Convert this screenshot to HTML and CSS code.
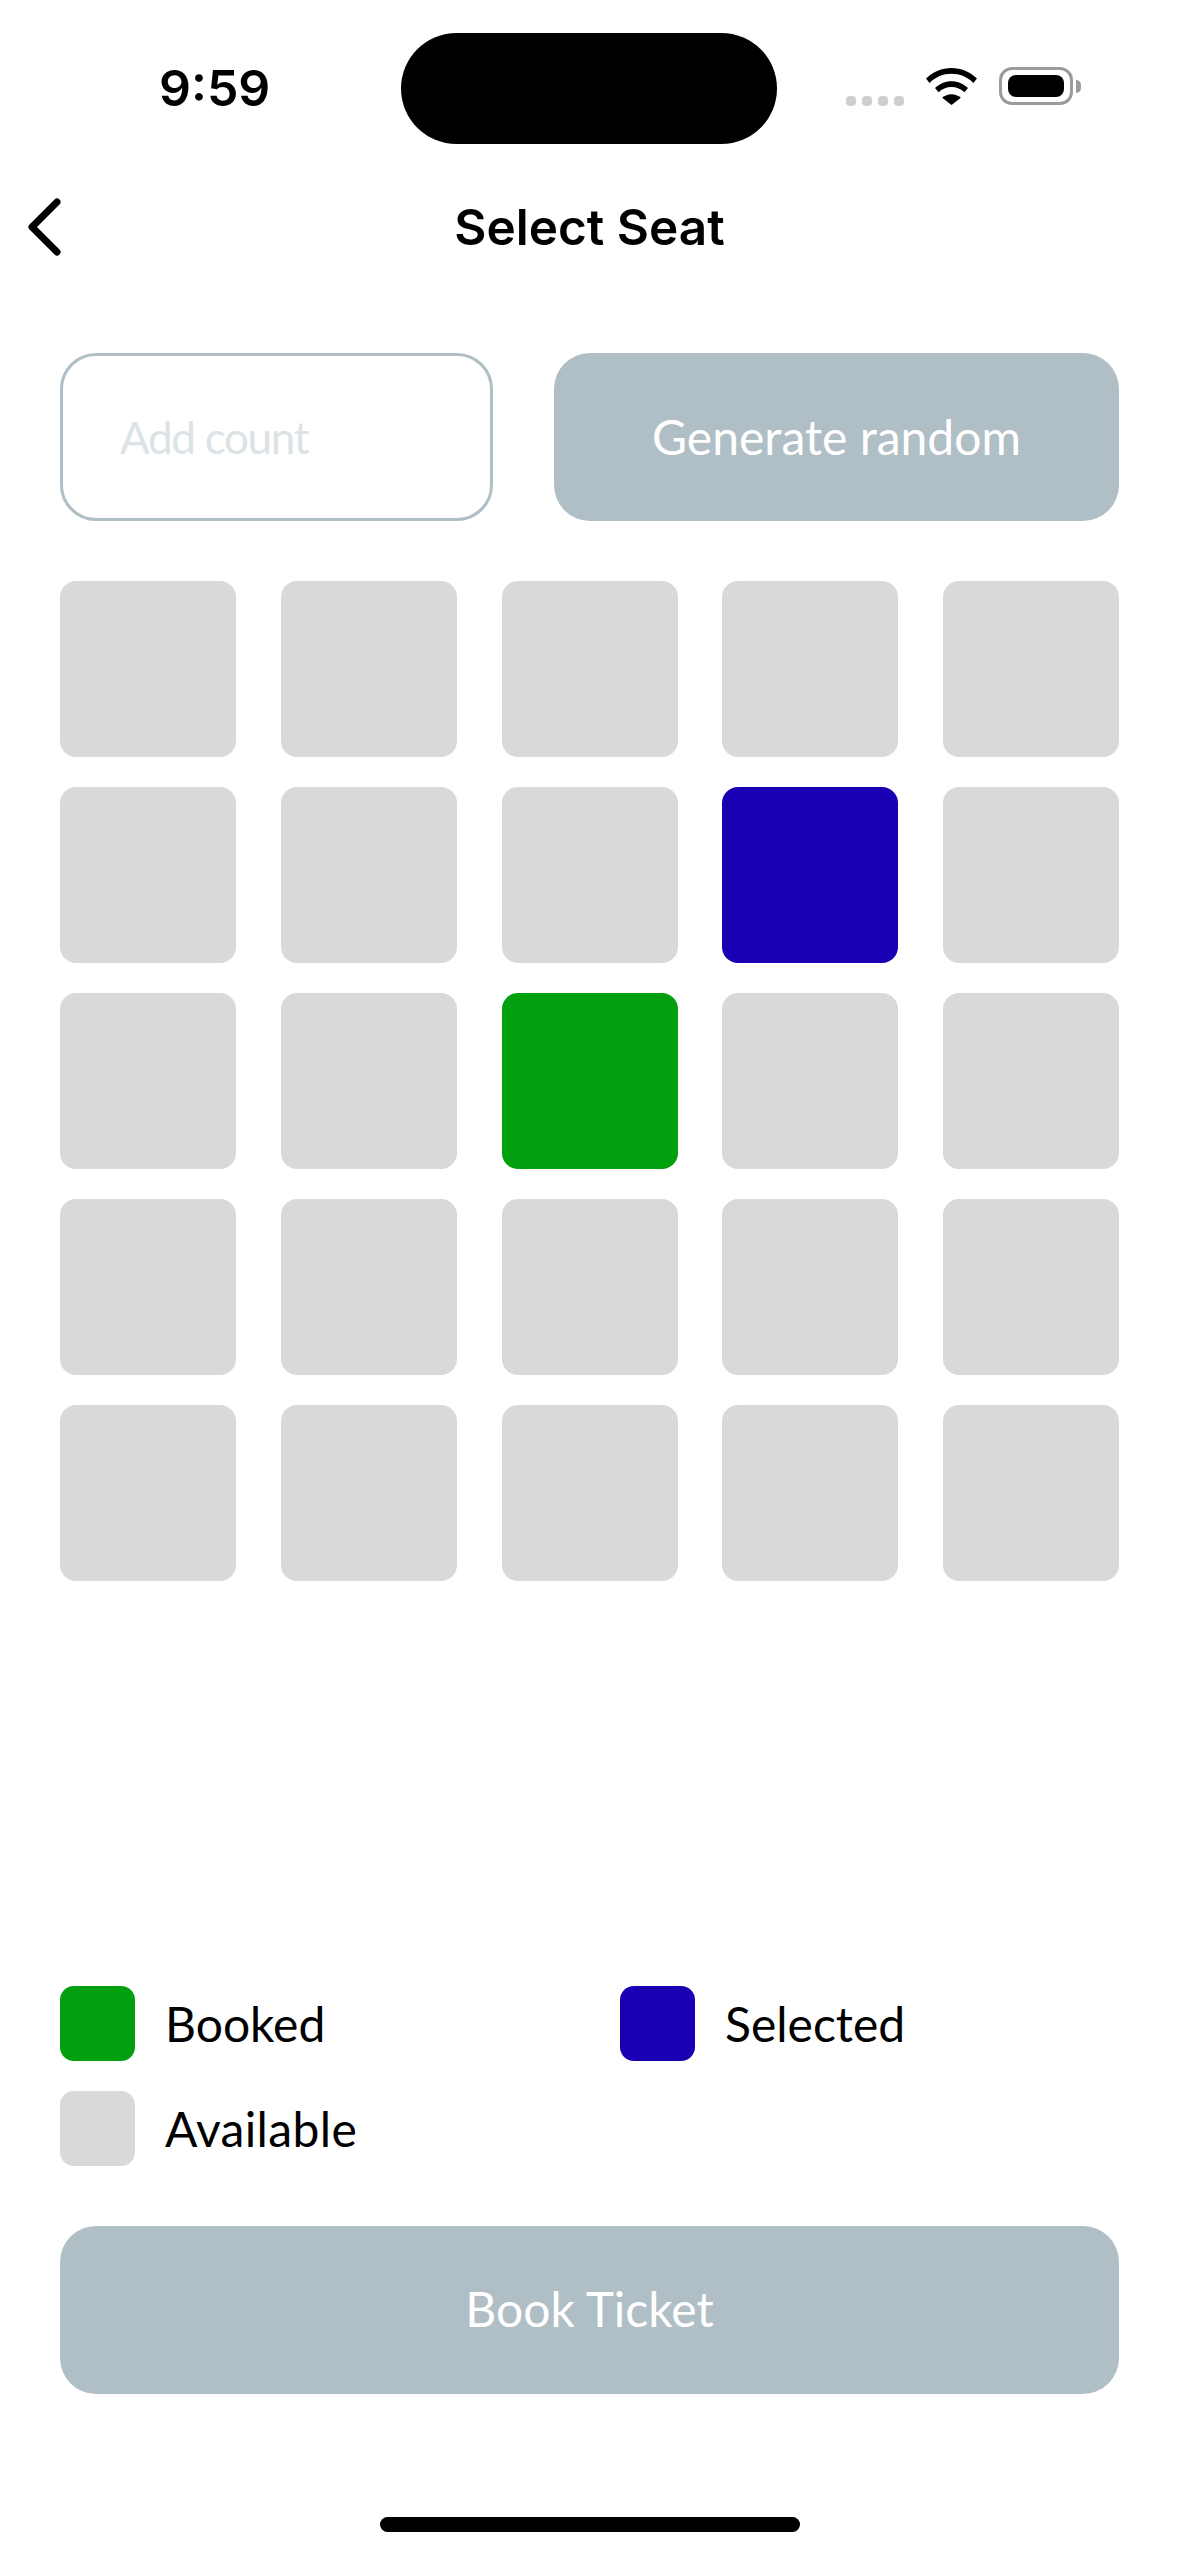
FILE: index.html
```html
<!DOCTYPE html>
<html lang="en">
<head>
    <meta charset="UTF-8">
    <title>Select Seat</title>
    <link rel="stylesheet" href="styles.css">
</head>
<body>
<div class="status">
    <div class="time">9:59</div>
    <div class="island"></div>
    <div class="status-icons">
        <div class="dots"><i></i><i></i><i></i><i></i></div>
        <svg class="wifi" width="51" height="37" viewBox="0 0 51 37">
            <path d="M25.5 0C15.8 0 7 3.6 0 10.6L3.6 15C9.5 9 17.2 5.8 25.5 5.8S41.5 9 47.4 15L51 10.6C44 3.6 35.2 0 25.5 0Z"/>
            <path d="M25.5 13.2C19.2 13.2 13.6 15.6 9 20L12.6 24.3C16 21 20.5 19 25.5 19S35 21 38.4 24.3L42 20C37.4 15.6 31.8 13.2 25.5 13.2Z"/>
            <path d="M25.5 26.3C22 26.3 18.8 27.6 16.2 29.8L25.5 37L34.8 29.8C32.2 27.6 29 26.3 25.5 26.3Z"/>
        </svg>
        <div class="battery"><div class="battery-fill"></div></div>
        <div class="battery-cap"></div>
    </div>
</div>

<div class="nav">
    <svg class="back" width="40" height="62" viewBox="0 0 40 62">
        <path d="M35 6L10 31L35 56" fill="none" stroke="#000" stroke-width="7" stroke-linecap="round" stroke-linejoin="round"/>
    </svg>
    <h1 class="title">Select Seat</h1>
</div>

<div class="content">
    <div class="controls">
        <div class="count">Add count</div>
        <div class="btn">Generate random</div>
    </div>

    <div class="seats">
        <div class="seat"></div><div class="seat"></div><div class="seat"></div><div class="seat"></div><div class="seat"></div>
        <div class="seat"></div><div class="seat"></div><div class="seat"></div><div class="seat selected"></div><div class="seat"></div>
        <div class="seat"></div><div class="seat"></div><div class="seat booked"></div><div class="seat"></div><div class="seat"></div>
        <div class="seat"></div><div class="seat"></div><div class="seat"></div><div class="seat"></div><div class="seat"></div>
        <div class="seat"></div><div class="seat"></div><div class="seat"></div><div class="seat"></div><div class="seat"></div>
    </div>

    <div class="legend">
        <div class="legend-item"><div class="swatch booked"></div>Booked</div>
        <div class="legend-item"><div class="swatch selected"></div>Selected</div>
        <div class="legend-item available"><div class="swatch"></div>Available</div>
    </div>

    <div class="btn book">Book Ticket</div>
</div>

<div class="home"></div>
</body>
</html>
```

FILE: styles.css
```css
*{
    padding: 0;
    margin: 0;
    box-sizing: border-box;
}
body{
    width: 1179px;
    height: 2556px;
    background: #fff;
    font-family: "Lato", sans-serif;
    color: #000;
    overflow: hidden;
}
.status{
    height: 144px;
    padding-top: 33px;
    display: flex;
    align-items: flex-start;
}
.time{
    width: 401px;
    padding: 32px 0 0 159px;
    font-family: "Inter", sans-serif;
    font-weight: 600;
    font-size: 50px;
    line-height: 46px;
}
.island{
    width: 376px;
    height: 111px;
    border-radius: 56px;
    background: #000;
}
.status-icons{
    margin-left: 69px;
    padding-top: 35px;
    display: flex;
    align-items: flex-start;
}
.dots{
    display: flex;
    gap: 6px;
    margin-top: 28px;
    margin-right: 22px;
}
.dots i{
    width: 10px;
    height: 10px;
    border-radius: 4px;
    background: #cfcfcf;
}
.wifi{
    margin-right: 22px;
}
.battery{
    width: 74px;
    height: 38px;
    padding: 5px 6px;
    margin-top: -1px;
    border: 3px solid #9b9b9b;
    border-radius: 13px;
}
.battery-fill{
    height: 100%;
    border-radius: 8px;
    background: #000;
}
.battery-cap{
    width: 5px;
    height: 13px;
    margin: 12px 0 0 3px;
    border-radius: 0 6px 6px 0;
    background: #9b9b9b;
}
.nav{
    height: 114px;
    margin-top: 26px;
    position: relative;
    display: flex;
    align-items: center;
    justify-content: center;
}
.back{
    position: absolute;
    left: 22px;
    top: 26px;
}
.title{
    font-family: "Inter", sans-serif;
    font-weight: 600;
    font-size: 49.5px;
    line-height: 60px;
}
.content{
    padding: 69px 60px 0;
}
.controls{
    display: flex;
    justify-content: space-between;
}
.count{
    width: 433px;
    height: 168px;
    padding-left: 57px;
    display: flex;
    align-items: center;
    border: 3px solid #b0bec5;
    border-radius: 36px;
    font-size: 44px;
    letter-spacing: -1.3px;
    color: #dce3e6;
}
.btn{
    height: 168px;
    padding-bottom: 3px;
    display: flex;
    align-items: center;
    justify-content: center;
    border-radius: 36px;
    background: #b0bec5;
    color: #fff;
    font-size: 48px;
}
.controls .btn{
    width: 565px;
    padding-bottom: 1px;
}
.seats{
    margin-top: 60px;
    display: grid;
    grid-template-columns: repeat(5, 176px);
    grid-auto-rows: 176px;
    justify-content: space-between;
    row-gap: 30px;
}
.seat{
    border-radius: 16px;
    background: #d9d9d9;
}
.seat.booked{
    background: #029f0e;
}
.seat.selected{
    background: #1900b2;
}
.legend{
    margin-top: 405px;
    display: grid;
    grid-template-columns: 560px 1fr;
    row-gap: 30px;
}
.legend-item{
    display: flex;
    align-items: center;
    gap: 30px;
    font-size: 48px;
}
.available{
    letter-spacing: 0.35px;
}
.swatch{
    width: 75px;
    height: 75px;
    border-radius: 14px;
    background: #d9d9d9;
}
.swatch.booked{
    background: #029f0e;
}
.swatch.selected{
    background: #1900b2;
}
.book{
    margin-top: 60px;
}
.home{
    width: 420px;
    height: 15px;
    margin: 123px auto 0;
    border-radius: 8px;
    background: #000;
}
```
